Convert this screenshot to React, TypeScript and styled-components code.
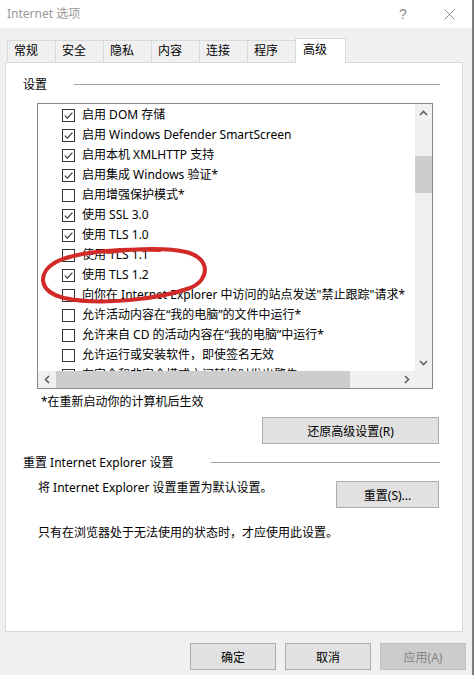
import React from 'react';
import styled, { createGlobalStyle } from 'styled-components';

const GlobalStyle = createGlobalStyle`
  html, body {
    margin: 0;
    padding: 0;
  }
  body {
    background: #f0f0f0;
    font-family: "Noto Sans", "Noto Sans CJK SC", sans-serif;
    font-size: 12px;
    color: #000;
  }
`;

const settings = [
  { label: '启用 DOM 存储', checked: true },
  { label: '启用 Windows Defender SmartScreen', checked: true },
  { label: '启用本机 XMLHTTP 支持', checked: true },
  { label: '启用集成 Windows 验证*', checked: true },
  { label: '启用增强保护模式*', checked: false },
  { label: '使用 SSL 3.0', checked: true },
  { label: '使用 TLS 1.0', checked: true },
  { label: '使用 TLS 1.1', checked: false },
  { label: '使用 TLS 1.2', checked: true },
  { label: '向你在 Internet Explorer 中访问的站点发送"禁止跟踪"请求*', checked: false },
  { label: '允许活动内容在“我的电脑”的文件中运行*', checked: false },
  { label: '允许来自 CD 的活动内容在“我的电脑”中运行*', checked: false },
  { label: '允许运行或安装软件，即使签名无效', checked: false },
  { label: '在安全和非安全模式之间转换时发出警告', checked: false },
];

const tabs = ['常规', '安全', '隐私', '内容', '连接', '程序', '高级'];

export default function App() {
  return (
    <>
      <GlobalStyle />
      <Window>
        <TitleBar>
          <TitleText>Internet 选项</TitleText>
          <CaptionButton>
            <HelpGlyph>?</HelpGlyph>
          </CaptionButton>
          <CaptionButton>
            <svg width="11" height="11" viewBox="0 0 11 11">
              <path d="M0.5 0.5 L10.5 10.5 M10.5 0.5 L0.5 10.5" stroke="#8a8a8a" strokeWidth="1" />
            </svg>
          </CaptionButton>
        </TitleBar>

        <TabStrip>
          {tabs.map((t) => (
            <Tab key={t} $active={t === '高级'}>
              {t}
            </Tab>
          ))}
        </TabStrip>

        <Panel>
          <GroupHeader>
            <span>设置</span>
            <HeaderRule $gap={27} />
          </GroupHeader>

          <GroupBody>
            <ListBox>
              <Items>
                {settings.map((s) => (
                  <Row key={s.label}>
                    <CheckBox>
                      {s.checked && (
                        <svg width="11" height="11" viewBox="0 0 11 11">
                          <path d="M1.8 5.6 L4.3 8.2 L9.4 2.6" fill="none" stroke="#333" strokeWidth="1.1" />
                        </svg>
                      )}
                    </CheckBox>
                    <RowLabel>{s.label}</RowLabel>
                  </Row>
                ))}
              </Items>

              <VScroll>
                <ArrowCell>
                  <svg width="9" height="6" viewBox="0 0 9 6">
                    <path d="M1 5 L4.5 1.5 L8 5" fill="none" stroke="#606060" strokeWidth="1.6" />
                  </svg>
                </ArrowCell>
                <VThumb />
                <Spacer />
                <ArrowCell>
                  <svg width="9" height="6" viewBox="0 0 9 6">
                    <path d="M1 1 L4.5 4.5 L8 1" fill="none" stroke="#606060" strokeWidth="1.6" />
                  </svg>
                </ArrowCell>
              </VScroll>

              <HScroll>
                <ArrowCell>
                  <svg width="6" height="9" viewBox="0 0 6 9">
                    <path d="M5 1 L1.5 4.5 L5 8" fill="none" stroke="#606060" strokeWidth="1.6" />
                  </svg>
                </ArrowCell>
                <HThumb />
                <Spacer />
                <ArrowCell>
                  <svg width="6" height="9" viewBox="0 0 6 9">
                    <path d="M1 1 L4.5 4.5 L1 8" fill="none" stroke="#606060" strokeWidth="1.6" />
                  </svg>
                </ArrowCell>
              </HScroll>

              <Corner />
            </ListBox>

            <Note>*在重新启动你的计算机后生效</Note>
          </GroupBody>

          <ButtonRow>
            <Button $width={177}>还原高级设置(R)</Button>
          </ButtonRow>

          <GroupHeader $top={11}>
            <span>重置 Internet Explorer 设置</span>
            <HeaderRule $gap={37} />
          </GroupHeader>

          <ResetRow>
            <ResetText>将 Internet Explorer 设置重置为默认设置。</ResetText>
            <Button $width={103}>重置(S)...</Button>
          </ResetRow>

          <Warning>只有在浏览器处于无法使用的状态时，才应使用此设置。</Warning>
        </Panel>

        <Footer>
          <Button $width={86}>确定</Button>
          <Button $width={86}>取消</Button>
          <Button $width={86} $disabled>
            应用(A)
          </Button>
        </Footer>

        {/* hand-drawn red loop over the TLS 1.2 row */}
        <Scribble width="180" height="66" viewBox="34 242 180 66">
          <path
            d="M160 250 C120 248, 76 252, 56 262 C38 272, 37 291, 64 298 C100 306, 160 299, 190 288 C210 280, 211 258, 186 252 C170 248, 140 248, 108 252"
            fill="none"
            stroke="#d22a26"
            strokeWidth="4"
            strokeLinecap="round"
          />
        </Scribble>
      </Window>
    </>
  );
}

const Window = styled.div`
  position: relative;
  width: 472px;
  height: 675px;
  border-right: 2px solid #7d7d7d;
  background: #f0f0f0;
  overflow: hidden;
`;

const TitleBar = styled.div`
  height: 28px;
  background: #fff;
  display: flex;
  align-items: center;
  padding-left: 7px;
`;

const TitleText = styled.span`
  flex: 1;
  color: #999;
  line-height: 16px;
`;

const CaptionButton = styled.div`
  width: 46px;
  height: 28px;
  display: flex;
  align-items: center;
  justify-content: center;
`;

const HelpGlyph = styled.span`
  color: #8a8a8a;
  font-size: 14px;
  font-family: "Liberation Sans", sans-serif;
`;

const TabStrip = styled.div`
  position: relative;
  z-index: 1;
  display: flex;
  align-items: flex-end;
  height: 24px;
  margin-top: 10px;
  padding-left: 7px;
`;

const Tab = styled.div<{ $active?: boolean }>`
  box-sizing: border-box;
  width: ${({ $active }) => ($active ? 51 : 49)}px;
  height: ${({ $active }) => ($active ? 25 : 22)}px;
  margin-left: -1px;
  margin-bottom: ${({ $active }) => ($active ? -1 : 0)}px;
  padding-left: ${({ $active }) => ($active ? 7 : 6)}px;
  border: 1px solid #d9d9d9;
  border-bottom: none;
  background: ${({ $active }) => ($active ? '#fff' : '#f0f0f0')};
  line-height: ${({ $active }) => ($active ? 21 : 20)}px;
  &:first-child {
    margin-left: 0;
  }
`;

const Panel = styled.div`
  box-sizing: border-box;
  width: 458px;
  height: 570px;
  margin-left: 5px;
  padding: 14px 22px 0 17px;
  border: 1px solid #d9d9d9;
  background: #fff;
`;

const GroupHeader = styled.div<{ $top?: number }>`
  display: flex;
  align-items: center;
  height: 16px;
  line-height: 16px;
  margin-top: ${({ $top }) => $top ?? 0}px;
`;

const HeaderRule = styled.div<{ $gap: number }>`
  flex: 1;
  height: 1px;
  margin-left: ${({ $gap }) => $gap}px;
  margin-top: -2px;
  background: #a0a0a0;
`;

const GroupBody = styled.div`
  padding: 0 7px 0 14px;
`;

const ListBox = styled.div`
  box-sizing: border-box;
  height: 286px;
  margin-top: 10px;
  border: 1px solid #828790;
  display: grid;
  grid-template-columns: 1fr 17px;
  grid-template-rows: 1fr 17px;
  overflow: hidden;
`;

const Items = styled.div`
  overflow: hidden;
  padding-top: 1px;
  white-space: nowrap;
`;

const Row = styled.div`
  display: flex;
  align-items: center;
  height: 20px;
  padding-left: 24px;
`;

const CheckBox = styled.div`
  box-sizing: border-box;
  flex: none;
  width: 13px;
  height: 13px;
  border: 1px solid #333;
  background: #fff;
  display: flex;
  align-items: center;
  justify-content: center;
`;

const RowLabel = styled.span`
  margin-left: 7px;
  line-height: 16px;
`;

const VScroll = styled.div`
  display: flex;
  flex-direction: column;
  background: #f0f0f0;
`;

const HScroll = styled.div`
  display: flex;
  background: #f0f0f0;
`;

const ArrowCell = styled.div`
  flex: none;
  width: 17px;
  height: 17px;
  display: flex;
  align-items: center;
  justify-content: center;
`;

const VThumb = styled.div`
  flex: none;
  height: 37px;
  margin-top: 35px;
  background: #cdcdcd;
`;

const HThumb = styled.div`
  flex: none;
  width: 294px;
  margin-left: 1px;
  background: #cdcdcd;
`;

const Spacer = styled.div`
  flex: 1;
`;

const Corner = styled.div`
  background: #f0f0f0;
`;

const Note = styled.div`
  margin-top: 5px;
  padding-left: 4px;
  line-height: 16px;
`;

const ButtonRow = styled.div`
  display: flex;
  justify-content: flex-end;
  margin-top: 7px;
  margin-right: 1px;
`;

const Button = styled.div<{ $width: number; $disabled?: boolean }>`
  box-sizing: border-box;
  flex: none;
  width: ${({ $width }) => $width}px;
  height: 27px;
  display: flex;
  align-items: center;
  justify-content: center;
  border: 1px solid ${({ $disabled }) => ($disabled ? '#bfbfbf' : '#adadad')};
  background: ${({ $disabled }) => ($disabled ? '#cccccc' : '#e1e1e1')};
  color: ${({ $disabled }) => ($disabled ? '#838383' : '#000')};
`;

const ResetRow = styled.div`
  display: flex;
  justify-content: space-between;
  align-items: flex-start;
  margin-top: 10px;
  margin-right: 1px;
  padding-left: 15px;
`;

const ResetText = styled.span`
  line-height: 16px;
  margin-top: -1px;
`;

const Warning = styled.div`
  margin-top: 17px;
  padding-left: 15px;
  line-height: 16px;
`;

const Footer = styled.div`
  display: flex;
  justify-content: flex-end;
  gap: 9px;
  margin-top: 11px;
  padding-right: 6px;
`;

const Scribble = styled.svg`
  position: absolute;
  left: 34px;
  top: 242px;
  pointer-events: none;
`;
